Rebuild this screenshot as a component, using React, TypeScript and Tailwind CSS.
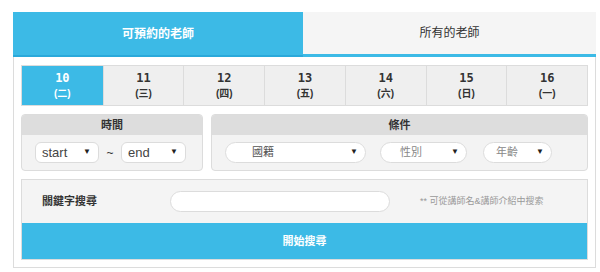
import React from 'react';

const days = [
  { d: '10', w: '(二)' },
  { d: '11', w: '(三)' },
  { d: '12', w: '(四)' },
  { d: '13', w: '(五)' },
  { d: '14', w: '(六)' },
  { d: '15', w: '(日)' },
  { d: '16', w: '(一)' },
];

const cjk = "font-['Liberation_Sans','Noto_Sans_CJK_TC',sans-serif]";

function FakeSelect({ label, className, textClass }: { label: string; className: string; textClass: string }) {
  return (
    <div className={`relative flex h-[21px] items-center border border-[#dcdcdc] bg-white ${className}`}>
      <span className={textClass}>{label}</span>
      <span className="absolute right-[7px] top-[5px] text-[8px] leading-none text-[#222]">▼</span>
    </div>
  );
}

export default function App() {
  const [active, setActive] = React.useState(0);

  return (
    <div className={`h-[272px] w-[600px] bg-white pl-[13px] pr-[4px] pt-[12px] ${cjk}`}>
      {/* tabs */}
      <div className="flex h-[45px]">
        <div className="flex w-[290px] items-center justify-center border-b-2 border-[#2aa9da] bg-[#3cbae6] text-[12px] font-bold text-white">
          可預約的老師
        </div>
        <div className="flex flex-1 items-center justify-center border-b-[3px] border-[#3cbae6] bg-[#f5f5f5] text-[12px] text-[#333]">
          所有的老師
        </div>
      </div>

      <div className="border border-t-0 border-[#dcdcdc] px-[7px] pb-[7px] pt-[8px]">
        {/* day row */}
        <div className="grid h-[41px] grid-cols-7 border border-[#dcdcdc] bg-[#efefef]">
          {days.map((day, i) => (
            <button
              key={day.d}
              onClick={() => setActive(i)}
              className={`flex flex-col items-center justify-center border-[#dcdcdc] ${i > 0 ? 'border-l' : ''} ${
                i === active ? 'bg-[#3cbae6] text-white' : 'text-[#333]'
              }`}
            >
              <span className="font-['DejaVu_Sans_Mono',monospace] text-[12px] font-bold leading-[15px]">{day.d}</span>
              <span className="text-[10px] font-bold leading-[15px]">{day.w}</span>
            </button>
          ))}
        </div>

        {/* filters */}
        <div className="mt-[8px] flex gap-[8px]">
          <div className="w-[182px] overflow-hidden rounded-[4px] border border-[#dcdcdc] bg-[#f3f3f3]">
            <div className="flex h-[20px] items-center justify-center bg-[#dddddd] text-[11px] font-bold text-[#333]">時間</div>
            <div className="flex h-[35px] items-center pl-[13px]">
              <FakeSelect label="start" className="w-[64px] rounded-[6px]" textClass="pl-[6px] text-[13px] text-[#444]" />
              <span className="w-[22px] text-center text-[12px] text-[#333]">~</span>
              <FakeSelect label="end" className="w-[65px] rounded-[6px]" textClass="pl-[6px] text-[13px] text-[#444]" />
            </div>
          </div>
          <div className="flex-1 overflow-hidden rounded-[4px] border border-[#dcdcdc] bg-[#f3f3f3]">
            <div className="flex h-[20px] items-center justify-center bg-[#dddddd] text-[11px] font-bold text-[#333]">條件</div>
            <div className="flex h-[35px] items-center pl-[13px]">
              <FakeSelect label="國籍" className="w-[141px] rounded-[11px]" textClass="pl-[26px] text-[11px] text-[#555]" />
              <FakeSelect label="性別" className="ml-[14px] w-[87px] rounded-[11px]" textClass="pl-[19px] text-[11px] text-[#888]" />
              <FakeSelect label="年齡" className="ml-[16px] w-[69px] rounded-[11px]" textClass="pl-[12px] text-[11px] text-[#888]" />
            </div>
          </div>
        </div>

        {/* keyword */}
        <div className="mt-[8px] border border-[#dcdcdc]">
          <div className="flex h-[43px] items-center bg-[#f4f4f4]">
            <span className="w-[148px] pl-[20px] text-[11px] font-bold text-[#333]">關鍵字搜尋</span>
            <input className="h-[21px] w-[220px] rounded-full border border-[#dcdcdc] bg-white px-3 text-[12px] outline-none" />
            <span className="ml-[30px] text-[9px] text-[#999]">** 可從講師名&amp;講師介紹中搜索</span>
          </div>
          <button className="flex h-[36px] w-full items-center justify-center bg-[#3cbae6] text-[11px] font-bold text-white">
            開始搜尋
          </button>
        </div>
      </div>
    </div>
  );
}
